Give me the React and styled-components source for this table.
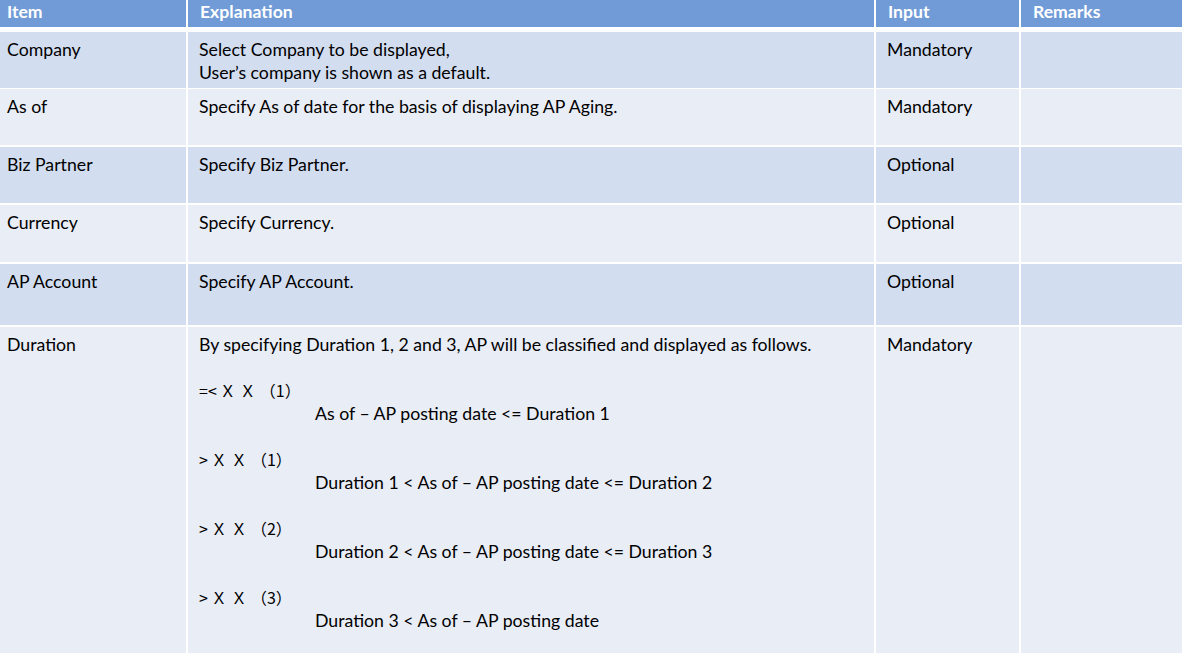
import React from "react";
import styled, {createGlobalStyle} from "styled-components";

const GlobalStyle = createGlobalStyle`
    html, body {
        margin: 0;
        padding: 0;
        background: #fff;
        overflow: hidden;
    }
    body {
        font-family: Lato, "Noto Sans CJK JP", sans-serif;
    }
`;

const COLUMNS = "186px 686px 143px 1fr";

const Table = styled.div`
    width: 1182px;
    height: 653px;
    display: flex;
    flex-direction: column;
    gap: 2px;
    background: #fff;
    overflow: hidden;
`;

const HeaderRow = styled.div`
    display: grid;
    grid-template-columns: ${COLUMNS};
    column-gap: 2px;
    height: 27px;
    margin-bottom: 3px;
    flex-shrink: 0;
`;

const HeaderCell = styled.div`
    background: #709bd7;
    color: #fff;
    font-weight: 700;
    font-size: 17.6px;
    line-height: 23px;
    padding: 0 ${props => (props.first ? "7px" : "12px")};
`;

const Row = styled.div`
    display: grid;
    grid-template-columns: ${COLUMNS};
    column-gap: 2px;
    height: ${props => (props.height ? `${props.height}px` : "auto")};
    flex: ${props => (props.grow ? "1 0 auto" : "0 0 auto")};
`;

const Cell = styled.div`
    background: ${props => (props.shade ? "#d2ddf0" : "#e9edf6")};
    color: #000;
    font-size: 17.7px;
    line-height: 23px;
    padding: 6px ${props => (props.first ? "7px" : "11px")} 4px;
`;

const Line = styled.div`
    min-height: 23px;
    white-space: nowrap;
    padding-left: ${props => (props.indent ? "116px" : "0")};
`;

// the "=< ＸＸ（n）" labels are set in a Japanese font, as in the slide
const Band = styled.span`
    font-family: "Noto Sans CJK JP", sans-serif;
    font-size: 16px;
    letter-spacing: ${props => props.spacing || 0}px;
    margin-right: ${props => props.gap || 0}px;
`;

const rows = [
    {item: "Company", lines: ["Select Company to be displayed,", "User\u2019s company is shown as a default."], input: "Mandatory", height: 55},
    {item: "As of", lines: ["Specify As of date for the basis of displaying AP Aging."], input: "Mandatory", height: 56},
    {item: "Biz Partner", lines: ["Specify Biz Partner."], input: "Optional", height: 56},
    {item: "Currency", lines: ["Specify Currency."], input: "Optional", height: 57},
    {item: "AP Account", lines: ["Specify AP Account."], input: "Optional", height: 61},
];

const durations = [
    {op: "=<", n: "1", rule: "As of \u2013 AP posting date <= Duration 1"},
    {op: ">", n: "1", rule: "Duration 1 < As of \u2013 AP posting date <= Duration 2"},
    {op: ">", n: "2", rule: "Duration 2 < As of \u2013 AP posting date <= Duration 3"},
    {op: ">", n: "3", rule: "Duration 3 < As of \u2013 AP posting date"},
];

export default function App() {
    return (
        <>
            <GlobalStyle />
            <Table>
                <HeaderRow>
                    <HeaderCell first>Item</HeaderCell>
                    <HeaderCell>Explanation</HeaderCell>
                    <HeaderCell>Input</HeaderCell>
                    <HeaderCell>Remarks</HeaderCell>
                </HeaderRow>
                {rows.map((row, i) => {
                    const shade = i % 2 === 0;
                    return (
                        <Row key={row.item} height={row.height}>
                            <Cell first shade={shade}>{row.item}</Cell>
                            <Cell shade={shade}>
                                {row.lines.map(text => (
                                    <Line key={text}>{text}</Line>
                                ))}
                            </Cell>
                            <Cell shade={shade}>{row.input}</Cell>
                            <Cell shade={shade} />
                        </Row>
                    );
                })}
                <Row grow>
                    <Cell first>Duration</Cell>
                    <Cell>
                        <Line>By specifying Duration 1, 2 and 3, AP will be classified and displayed as follows.</Line>
                        {durations.map(d => (
                            <React.Fragment key={d.rule}>
                                <Line />
                                <Line>
                                    <Band gap={3}>{d.op}</Band>
                                    <Band spacing={4}>{"\uFF38\uFF38"}</Band>
                                    <Band>{`\uFF08${d.n}\uFF09`}</Band>
                                </Line>
                                <Line indent>{d.rule}</Line>
                            </React.Fragment>
                        ))}
                    </Cell>
                    <Cell>Mandatory</Cell>
                    <Cell />
                </Row>
            </Table>
        </>
    );
}
